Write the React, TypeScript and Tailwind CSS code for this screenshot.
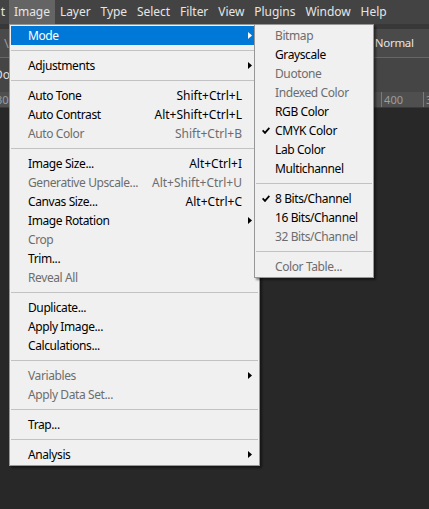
type Item =
  | "sep"
  | { label: string; key?: string; arrow?: boolean; off?: boolean; active?: boolean; checked?: boolean };

const FONT = { fontFamily: '"Segoe UI", "Noto Sans", sans-serif' };

const TOP = ["Image", "Layer", "Type", "Select", "Filter", "View", "Plugins", "Window", "Help"];

const MAIN: Item[] = [
  { label: "Mode", arrow: true, active: true },
  "sep",
  { label: "Adjustments", arrow: true },
  "sep",
  { label: "Auto Tone", key: "Shift+Ctrl+L" },
  { label: "Auto Contrast", key: "Alt+Shift+Ctrl+L" },
  { label: "Auto Color", key: "Shift+Ctrl+B", off: true },
  "sep",
  { label: "Image Size...", key: "Alt+Ctrl+I" },
  { label: "Generative Upscale...", key: "Alt+Shift+Ctrl+U", off: true },
  { label: "Canvas Size...", key: "Alt+Ctrl+C" },
  { label: "Image Rotation", arrow: true },
  { label: "Crop", off: true },
  { label: "Trim..." },
  { label: "Reveal All", off: true },
  "sep",
  { label: "Duplicate..." },
  { label: "Apply Image..." },
  { label: "Calculations..." },
  "sep",
  { label: "Variables", arrow: true, off: true },
  { label: "Apply Data Set...", off: true },
  "sep",
  { label: "Trap..." },
  "sep",
  { label: "Analysis", arrow: true },
];

const MODE: Item[] = [
  { label: "Bitmap", off: true },
  { label: "Grayscale" },
  { label: "Duotone", off: true },
  { label: "Indexed Color", off: true },
  { label: "RGB Color" },
  { label: "CMYK Color", checked: true },
  { label: "Lab Color" },
  { label: "Multichannel" },
  "sep",
  { label: "8 Bits/Channel", checked: true },
  { label: "16 Bits/Channel" },
  { label: "32 Bits/Channel", off: true },
  "sep",
  { label: "Color Table...", off: true },
];

const Arrow = ({ white }: { white?: boolean }) => (
  <svg width="4" height="7" viewBox="0 0 4 7" className="absolute right-[6px] top-[6px]">
    <polygon points="0,0 4,3.5 0,7" fill={white ? "#ffffff" : "#000000"} />
  </svg>
);

const Check = () => (
  <svg width="8" height="7" viewBox="0 0 8 7" className="absolute left-[6px] top-[6px]">
    <path d="M0.6 3.4 L3 5.9 L7.4 0.9" stroke="#000" strokeWidth="1.8" fill="none" />
  </svg>
);

function Menu({ items, pl, pr }: { items: Item[]; pl: string; pr: string }) {
  return (
    <div className="flex flex-col">
      {items.map((it, i) =>
        it === "sep" ? (
          <div key={i} className="h-[11px] flex items-center">
            <div className="h-px w-full bg-[#c2c2c2]" />
          </div>
        ) : (
          <div
            key={i}
            className={`relative h-[19px] flex items-center ${pl} ${pr} ${
              it.active ? "bg-[#0078d7] text-white" : it.off ? "text-[#6d6d6d]" : "text-black"
            }`}
          >
            {it.checked && <Check />}
            <span className="whitespace-nowrap tracking-[-0.4px]">{it.label}</span>
            {it.key && <span className="ml-auto whitespace-nowrap">{it.key}</span>}
            {it.arrow && <Arrow white={it.active} />}
          </div>
        )
      )}
    </div>
  );
}

export default function App() {
  return (
    <div className="relative w-[429px] h-[509px] overflow-hidden bg-[#282828] text-[12px] leading-none" style={FONT}>
      {/* menu bar */}
      <div className="h-[24px] bg-[#434343] flex items-stretch text-[#e6e6e6] tracking-[-0.05px]">
        <div className="w-[9px] flex items-center justify-end overflow-hidden pr-[4px]">t</div>
        {TOP.map((t) => (
          <div
            key={t}
            className={`flex items-center px-[5px] ${t === "Image" ? "bg-[#646464]" : ""}`}
          >
            {t}
          </div>
        ))}
      </div>

      {/* options bar */}
      <div className="h-[5px] bg-[#383838]" />
      <div className="h-[28px] bg-[#4a4a4a] flex items-center text-[#e6e6e6]">
        <span className="ml-[4px] text-[#9a9a9a] text-[13px]">\</span>
        <span className="ml-[366px] text-[11.5px] tracking-[-0.3px]">Normal</span>
      </div>
      <div className="h-[1px] bg-[#666666]" />

      {/* document tab area */}
      <div className="h-[34px] bg-[#454545] flex items-center text-[#dedede]">
        <span className="-ml-[6px]">Doc</span>
      </div>

      {/* ruler */}
      <div className="h-[16px] bg-[#4f4f4f] flex items-center text-[#9d9d9d] text-[11px] border-b border-[#3a3a3a]">
        <span className="-ml-[4px]">300</span>
        <div className="ml-auto h-full flex items-center">
          <div className="w-px h-full bg-[#7a7a7a]" />
          <span className="ml-[2px]">400</span>
          <div className="ml-[20px] w-px h-full bg-[#7a7a7a]" />
          <span className="ml-[2px] w-[3px] overflow-hidden">3</span>
        </div>
      </div>

      {/* Image menu */}
      <div className="absolute left-[9px] top-[24px] w-[251px] bg-[#f0f0f0] border border-[#979797] p-px shadow-[2px_2px_2px_rgba(0,0,0,0.45)]">
        <Menu items={MAIN} pl="pl-[17px]" pr="pr-[16px]" />
      </div>

      {/* Mode submenu */}
      <div className="absolute left-[254px] top-[24px] w-[120px] bg-[#f0f0f0] border border-[#979797] p-px shadow-[2px_2px_2px_rgba(0,0,0,0.45)]">
        <Menu items={MODE} pl="pl-[19px]" pr="pr-[8px]" />
      </div>
    </div>
  );
}
